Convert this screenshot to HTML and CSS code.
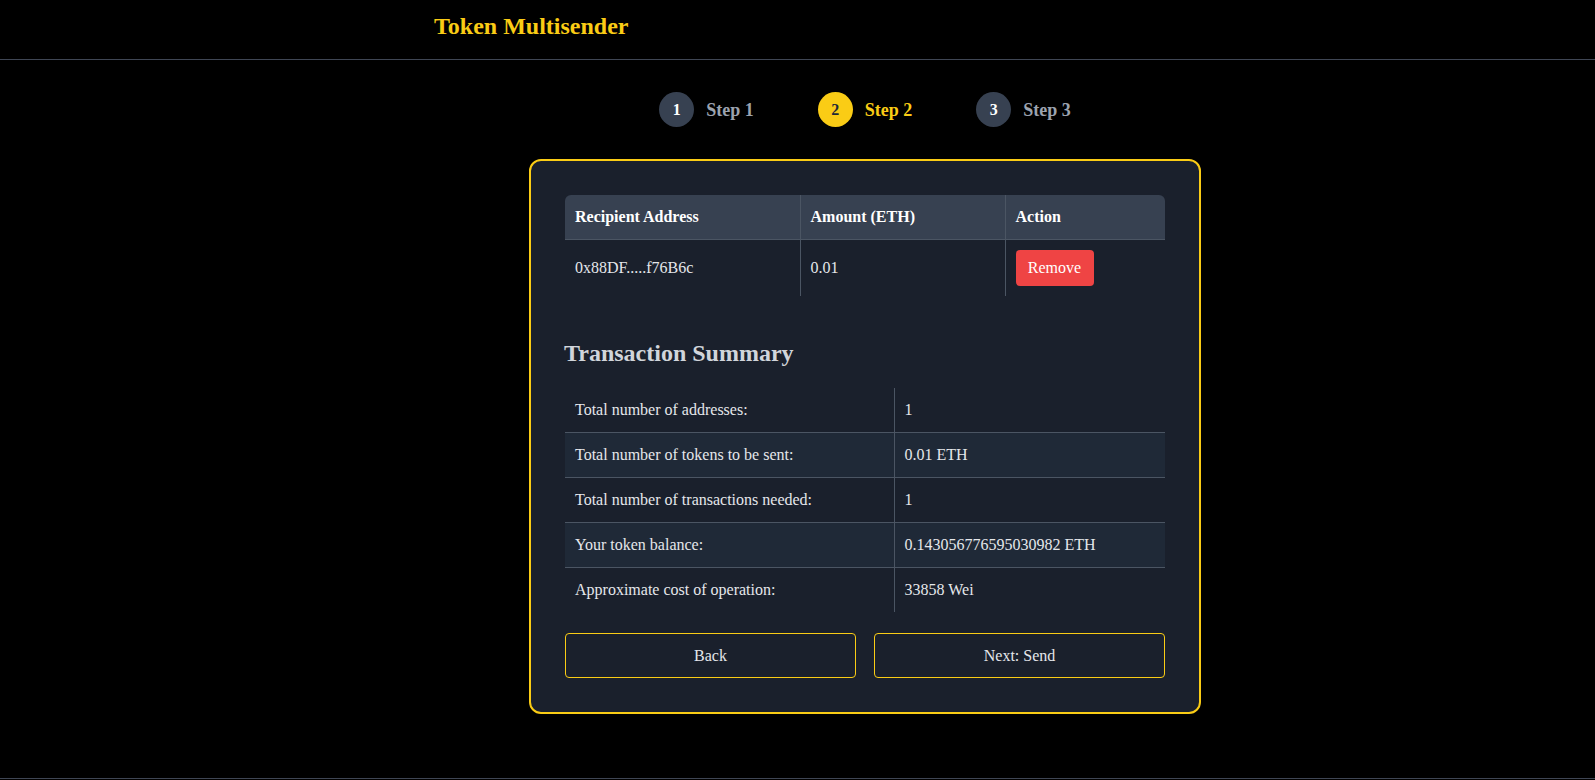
FILE: index.html
```html
<!DOCTYPE html>
<html lang="en">
<head>
<meta charset="utf-8">
<title>Token Multisender</title>
<link rel="stylesheet" href="styles.css">
</head>
<body>
  <header class="topbar">
    <div class="container">
      <h1 class="brand">Token Multisender</h1>
    </div>
  </header>
  <main class="main">
    <div class="container">
      <ol class="steps">
        <li class="step"><span class="step-num">1</span><span class="step-label">Step 1</span></li>
        <li class="step step-active"><span class="step-num">2</span><span class="step-label">Step 2</span></li>
        <li class="step"><span class="step-num">3</span><span class="step-label">Step 3</span></li>
      </ol>

      <section class="card">
        <table class="recipients">
          <colgroup>
            <col class="col-addr">
            <col class="col-amount">
            <col class="col-action">
          </colgroup>
          <thead>
            <tr>
              <th>Recipient Address</th>
              <th>Amount (ETH)</th>
              <th>Action</th>
            </tr>
          </thead>
          <tbody>
            <tr>
              <td>0x88DF.....f76B6c</td>
              <td>0.01</td>
              <td><button class="btn-remove" type="button">Remove</button></td>
            </tr>
          </tbody>
        </table>

        <h2 class="summary-title">Transaction Summary</h2>
        <table class="summary">
          <colgroup>
            <col class="col-label">
            <col class="col-value">
          </colgroup>
          <tbody>
            <tr><td>Total number of addresses:</td><td>1</td></tr>
            <tr><td>Total number of tokens to be sent:</td><td>0.01 ETH</td></tr>
            <tr><td>Total number of transactions needed:</td><td>1</td></tr>
            <tr><td>Your token balance:</td><td>0.143056776595030982 ETH</td></tr>
            <tr><td>Approximate cost of operation:</td><td>33858 Wei</td></tr>
          </tbody>
        </table>

        <div class="actions">
          <button class="btn-outline" type="button">Back</button>
          <button class="btn-outline" type="button">Next: Send</button>
        </div>
      </section>
    </div>
  </main>
  <footer class="footer"></footer>
</body>
</html>
```

FILE: styles.css
```css
* {
  box-sizing: border-box;
}

html, body {
  margin: 0;
  padding: 0;
  background: #000000;
}

body {
  font-family: "Liberation Serif", "Times New Roman", serif;
  font-size: 16px;
  color: #e5e7eb;
  overflow: hidden;
}

.container {
  margin-left: 434px;
  width: 862px;
}

.topbar {
  height: 60px;
  border-bottom: 1px solid #3f4654;
}

.brand {
  margin: 0;
  padding-top: 10px;
  font-size: 24px;
  line-height: 32px;
  font-weight: 700;
  color: #facc15;
}

.main {
  padding-top: 32px;
  padding-bottom: 64px;
}

.steps {
  list-style: none;
  margin: 0;
  padding: 0;
  display: flex;
  justify-content: center;
  gap: 64px;
}

.step {
  display: flex;
  align-items: center;
  gap: 12px;
}

.step-num {
  width: 35px;
  height: 35px;
  border-radius: 50%;
  background: #374151;
  color: #ffffff;
  font-weight: 700;
  font-size: 16px;
  display: flex;
  align-items: center;
  justify-content: center;
}

.step-label {
  font-size: 18px;
  font-weight: 700;
  color: #9ca3af;
  padding-top: 2px;
}

.step-active .step-num {
  background: #facc15;
  color: #1f2937;
}

.step-active .step-label {
  color: #facc15;
}

.card {
  width: 672px;
  margin: 32px auto 0;
  padding: 34px;
  background: #1a202c;
  border: 2px solid #facc15;
  border-radius: 12px;
}

table {
  width: 600px;
  border-collapse: collapse;
  table-layout: fixed;
}

.col-addr { width: 235px; }
.col-amount { width: 205px; }
.col-action { width: 160px; }

.recipients thead tr {
  background: #374151;
}

.recipients th {
  text-align: left;
  font-weight: 700;
  color: #ffffff;
  padding: 10px 10px;
  line-height: 24px;
  border-bottom: 1px solid #4b5563;
}

.recipients th:first-child {
  border-top-left-radius: 6px;
}

.recipients th:last-child {
  border-top-right-radius: 6px;
}

.recipients th + th,
.recipients td + td {
  border-left: 1px solid #4b5563;
}

.recipients td {
  padding: 10px 10px;
  line-height: 24px;
  vertical-align: middle;
  color: #e5e7eb;
}

.btn-remove {
  font-family: inherit;
  font-size: 16px;
  line-height: 24px;
  height: 36px;
  width: 78px;
  padding: 0;
  border: none;
  border-radius: 4px;
  background: #ef4444;
  color: #ffffff;
  cursor: pointer;
}

.summary-title {
  margin: 41px 0 19px -1px;
  font-size: 24px;
  line-height: 32px;
  font-weight: 700;
  color: #d1d5db;
}

.col-label { width: 329px; }
.col-value { width: 271px; }

.summary td {
  padding: 10px 10px;
  line-height: 24px;
  color: #e5e7eb;
}

.summary td + td {
  border-left: 1px solid #4b5563;
}

.summary tr + tr {
  border-top: 1px solid #4b5563;
}

.summary tr:nth-child(even) {
  background: #1f2937;
}

.actions {
  margin-top: 21px;
  display: grid;
  grid-template-columns: 1fr 1fr;
  gap: 18px;
}

.btn-outline {
  font-family: inherit;
  font-size: 16px;
  line-height: 23px;
  padding: 10px 0;
  background: transparent;
  color: #e5e7eb;
  border: 1px solid #facc15;
  border-radius: 4px;
  cursor: pointer;
}

.footer {
  border-top: 1px solid #3f4654;
}
```
